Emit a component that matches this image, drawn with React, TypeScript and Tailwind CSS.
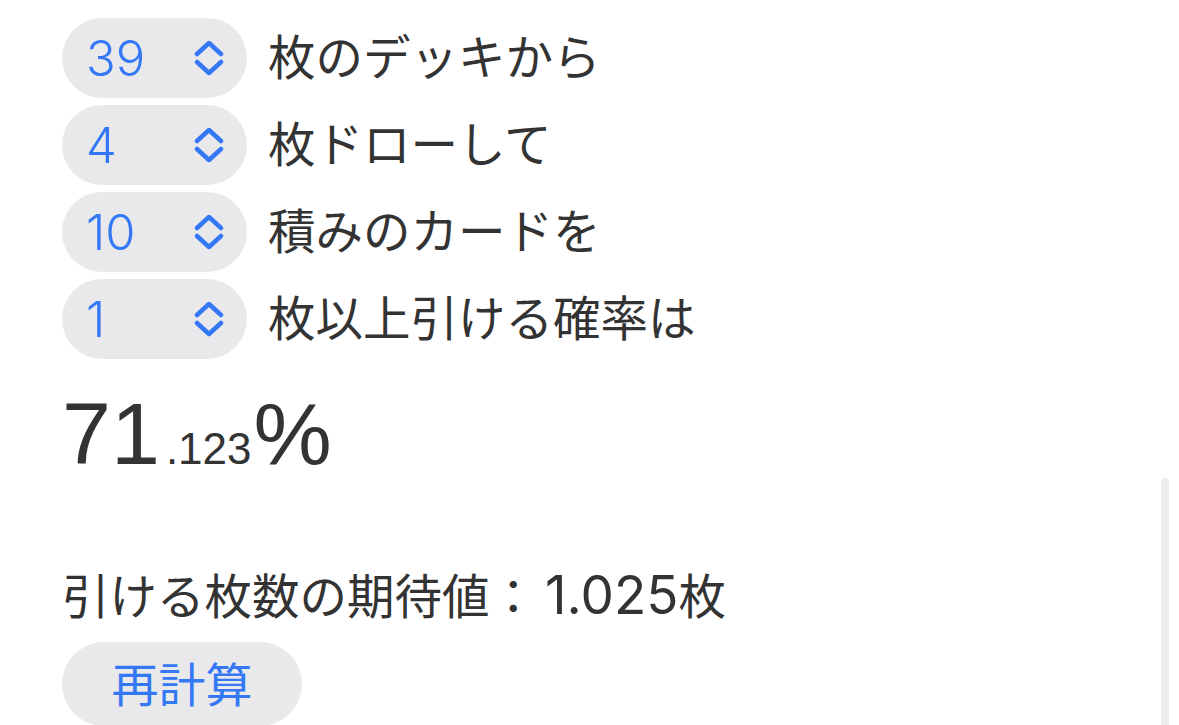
const font = { fontFamily: '"Inter", "Noto Sans CJK JP", sans-serif' };
const bigFont = { fontFamily: '"Liberation Sans", "Noto Sans CJK JP", sans-serif' };

function Chevrons() {
  return (
    <svg width="30" height="36" viewBox="0 0 30 36" fill="none" stroke="#3478f6" strokeWidth="4.5" strokeLinecap="round" strokeLinejoin="round">
      <path d="M3 14 L15 3 L27 14" />
      <path d="M3 22 L15 33 L27 22" />
    </svg>
  );
}

function Stepper({ value, label }: { value: string; label: string }) {
  return (
    <div className="flex items-center gap-[21px]">
      <div className="flex h-[80px] w-[185px] items-center justify-between rounded-full bg-[#e9e9eb] pl-[24px] pr-[23px]">
        <span className="text-[49px] font-light leading-none text-[#3478f6]">{value}</span>
        <Chevrons />
      </div>
      <span className="text-[47.5px] leading-none text-[#333333]">{label}</span>
    </div>
  );
}

export default function App() {
  return (
    <div className="relative h-[725px] w-[1179px] overflow-hidden bg-white" style={font}>
      <div className="flex flex-col pl-[62px] pt-[18px]">
        <div className="flex flex-col gap-[7px]">
          <Stepper value="39" label="枚のデッキから" />
          <Stepper value="4" label="枚ドローして" />
          <Stepper value="10" label="積みのカードを" />
          <Stepper value="1" label="枚以上引ける確率は" />
        </div>

        <div className="mt-[31px] flex items-baseline text-[#333333]" style={bigFont}>
          <span className="text-[88px] leading-none">71</span>
          <span className="ml-[6px] text-[44px] leading-none">.123</span>
          <span className="ml-[2px] text-[88px] leading-none">%</span>
        </div>

        <div className="mt-[91px] flex items-baseline leading-none text-[#333333]">
          <span className="text-[47.5px]">引ける枚数の期待値：</span>
          <span className="ml-[8px] text-[53px]">1.025</span>
          <span className="text-[47.5px]">枚</span>
        </div>

        <button className="mt-[20px] flex h-[84px] w-[240px] items-center justify-center rounded-full bg-[#e9e9eb] text-[47px] leading-none text-[#3478f6]">
          再計算
        </button>
      </div>

      <div className="absolute left-[1161px] top-[478px] h-[260px] w-[8px] rounded-full bg-[#ececec]" />
    </div>
  );
}
